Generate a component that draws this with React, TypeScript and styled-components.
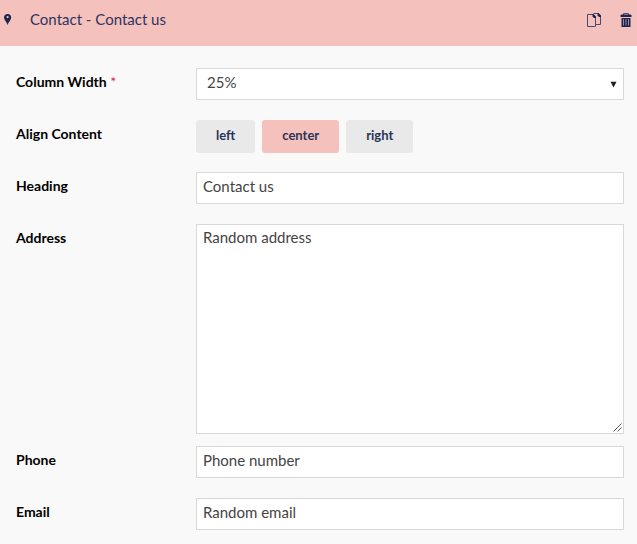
import React, { useState } from "react";
import styled, { createGlobalStyle, css } from "styled-components";

const GlobalStyle = createGlobalStyle`
  *, *::before, *::after { box-sizing: border-box; }
  body {
    margin: 0;
    background: #f9f9f9;
    font-family: Lato, "Open Sans", sans-serif;
    font-size: 15px;
    overflow: hidden;
  }
`;

const Panel = styled.main`
  width: 637px;
  height: 544px;
  background: #f9f9f9;
  overflow: hidden;
`;

const Header = styled.header`
  display: flex;
  align-items: center;
  height: 46px;
  padding: 0 5px 6px 3px;
  background: #f5c1bc;
  color: #1b264f;
`;

const Title = styled.h1`
  flex: 1;
  margin: 0 0 2px 17px;
  font-size: 15px;
  font-weight: 400;
  line-height: 20px;
  color: #2c3560;
`;

const Actions = styled.div`
  display: flex;
  align-items: center;
  gap: 18px;
`;

const IconButton = styled.button`
  display: flex;
  padding: 0;
  border: 0;
  background: none;
  color: inherit;
`;

const Form = styled.form`
  display: flex;
  flex-direction: column;
  padding: 22px 13px 0 16px;
`;

const Row = styled.div<{ $height?: number }>`
  display: grid;
  grid-template-columns: 180px 1fr;
  align-items: start;
  height: ${({ $height = 52 }) => $height}px;
`;

const Label = styled.label`
  padding-top: 4px;
  color: #000;
  font-size: 14px;
  font-weight: 700;
  line-height: 20px;
`;

const Required = styled.span`
  color: #d42054;
  font-weight: 400;
`;

const fieldStyle = css`
  display: block;
  width: 100%;
  margin: 0;
  border: 1px solid #d8d7d9;
  border-radius: 0;
  outline: 0;
  background: #fff;
  color: #444;
  font-family: inherit;
  font-size: 15px;
  line-height: 20px;
`;

const Input = styled.input`
  ${fieldStyle}
  height: 32px;
  padding: 4px 6px 8px;
`;

const TextAreaBox = styled.div`
  position: relative;
`;

const TextArea = styled.textarea`
  ${fieldStyle}
  height: 210px;
  padding: 2px 6px;
  resize: none;
`;

const Grip = styled.svg`
  position: absolute;
  right: 2px;
  bottom: 2px;
`;

const SelectBox = styled.div`
  ${fieldStyle}
  display: flex;
  align-items: center;
  justify-content: space-between;
  height: 32px;
  padding: 0 6px 0 10px;
`;

const SelectValue = styled.span`
  padding-bottom: 4px;
`;

const Options = styled.div`
  display: flex;
  gap: 7px;
`;

const Option = styled.button<{ $active: boolean }>`
  height: 33px;
  padding: 0 20px 4px;
  border: 0;
  border-radius: 3px;
  background: ${({ $active }) => ($active ? "#f5c1bc" : "#e9e9e9")};
  color: #2a3358;
  font-family: inherit;
  font-size: 13px;
  font-weight: 700;
`;

const PinIcon = () => (
  <svg width="10" height="14" viewBox="0 0 10 14">
    <path
      fill="currentColor"
      fillRule="evenodd"
      d="M4.6 1C2.4 1 1 2.6 1 4.6C1 7.3 3.7 9 4.6 12C5.5 9 8.2 7.3 8.2 4.6C8.2 2.6 6.8 1 4.6 1ZM4.6 3A1.1 1.1 0 1 1 4.6 5.2A1.1 1.1 0 0 1 4.6 3Z"
    />
  </svg>
);

const CopyIcon = () => (
  <svg width="16" height="16" viewBox="0 0 16 16" fill="none" stroke="#4b4a70">
    <path d="M1.5 2.5H7L9.5 5V14.5H1.5Z" />
    <path d="M7.5 1.5H12L14.5 4V12.5H10" />
    <path fill="currentColor" stroke="none" d="M6.5 2H7.5L10 4.5V6H8L6.5 4.5ZM11.5 1H12.5L15 3.5V5H13L11.5 3.5Z" />
  </svg>
);

const TrashIcon = () => (
  <svg width="12" height="16" viewBox="0 0 12 16">
    <path fill="none" stroke="#4b4a70" d="M3.5 3V1.5H8.5V3" />
    <path fill="currentColor" d="M1.5 2.5H10.5L11.5 3.5V5H.5V3.5Z" />
    <path fill="currentColor" d="M1.5 6H10.5V15H1.5Z" />
    <path stroke="#9b8798" d="M3.5 7V13.5M6 7V13.5M8.5 7V13.5" />
  </svg>
);

const Caret = () => (
  <svg width="7" height="7" viewBox="0 0 7 7">
    <path fill="#222" d="M.5 .8H6.5L3.5 6.5Z" />
  </svg>
);

export default function App() {
  const [align, setAlign] = useState("center");
  return (
    <Panel>
      <GlobalStyle />
      <Header>
        <PinIcon />
        <Title>Contact - Contact us</Title>
        <Actions>
          <IconButton><CopyIcon /></IconButton>
          <IconButton><TrashIcon /></IconButton>
        </Actions>
      </Header>
      <Form>
        <Row>
          <Label>Column Width <Required>*</Required></Label>
          <SelectBox><SelectValue>25%</SelectValue><Caret /></SelectBox>
        </Row>
        <Row>
          <Label>Align Content</Label>
          <Options>
            {["left", "center", "right"].map((name) => (
              <Option key={name} type="button" $active={align === name} onClick={() => setAlign(name)}>
                {name}
              </Option>
            ))}
          </Options>
        </Row>
        <Row>
          <Label htmlFor="heading">Heading</Label>
          <Input id="heading" defaultValue="Contact us" />
        </Row>
        <Row $height={222}>
          <Label htmlFor="address">Address</Label>
          <TextAreaBox>
            <TextArea id="address" defaultValue="Random address" />
            <Grip width="9" height="9" viewBox="0 0 9 9" stroke="#555">
              <path d="M.5 8.5L8.5 .5M4.5 8.5L8.5 4.5" />
            </Grip>
          </TextAreaBox>
        </Row>
        <Row>
          <Label htmlFor="phone">Phone</Label>
          <Input id="phone" defaultValue="Phone number" />
        </Row>
        <Row>
          <Label htmlFor="email">Email</Label>
          <Input id="email" defaultValue="Random email" />
        </Row>
      </Form>
    </Panel>
  );
}
